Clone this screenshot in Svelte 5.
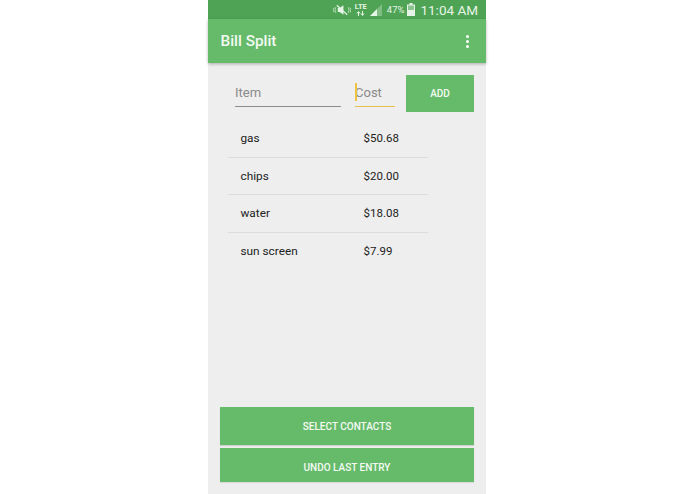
<script>
  const rows = [
    { item: 'gas', cost: '$50.68' },
    { item: 'chips', cost: '$20.00' },
    { item: 'water', cost: '$18.08' },
    { item: 'sun screen', cost: '$7.99' }
  ];
</script>

<div class="page">
  <div class="phone">
    <div class="status">
      <svg class="mute" width="18" height="12" viewBox="0 0 19 12" aria-hidden="true">
        <path d="M1 3.500 0 6l1 2.500M3 3 2 6l1 3M16 3l1 3-1 3M18 3.500 19 6l-1 2.500" fill="none" stroke="#d8ecd9" stroke-width=".8"/>
        <path d="M5 4h2l4-3v10L7 8H5z" fill="#e6f3e7"/>
        <path d="M4 1l11 10" stroke="#e6f3e7" stroke-width="1.200"/>
      </svg>
      <div class="lte">
        <span>LTE</span>
        <svg width="9" height="5" viewBox="0 0 9 5" aria-hidden="true">
          <path d="M2.500 5V1M1 2.500 2.500.5 4 2.500M6.500 0v4M5 2.500 6.500 4.500 8 2.500" fill="none" stroke="#e6f3e7" stroke-width="1"/>
        </svg>
      </div>
      <svg class="signal" width="12" height="12" viewBox="0 0 12 12" aria-hidden="true">
        <path d="M0 12 12 0v12z" fill="#7fbd82"/>
        <path d="M0 12 7 5v7z" fill="#e6f3e7"/>
      </svg>
      <span class="pct">47%</span>
      <svg class="battery" width="8" height="13" viewBox="0 0 8 13" aria-hidden="true">
        <path d="M2.500 0h3v1.500h2.500V13H0V1.500h2.500z" fill="#e6f3e7"/>
        <path d="M1 2.500h6V7H1z" fill="#8cc48f"/>
      </svg>
      <span class="clock">11:04 AM</span>
    </div>

    <header class="bar">
      <span class="title">Bill Split</span>
      <div class="overflow" aria-hidden="true"><i></i><i></i><i></i></div>
    </header>

    <main class="content">
      <div class="entry">
        <div class="field item"><span class="hint">Item</span></div>
        <div class="field cost"><span class="caret"></span><span class="hint">Cost</span></div>
        <button class="btn add">ADD</button>
      </div>

      <ul class="list">
        {#each rows as row}
          <li>
            <span class="name">{row.item}</span>
            <span class="price">{row.cost}</span>
          </li>
        {/each}
      </ul>

      <div class="actions">
        <button class="btn select">SELECT CONTACTS</button>
        <button class="btn undo">UNDO LAST ENTRY</button>
      </div>
    </main>
  </div>
</div>

<style>
  :global(body) {
    margin: 0;
    background: #fff;
  }
  .page {
    width: 695px;
    height: 494px;
    display: flex;
    justify-content: center;
    overflow: hidden;
    font-family: Roboto, "Liberation Sans", sans-serif;
  }
  .phone {
    width: 278px;
    height: 494px;
    margin-left: -1px;
    display: flex;
    flex-direction: column;
    background: #eeeeee;
  }
  .status {
    height: 19px;
    flex: none;
    display: flex;
    align-items: center;
    justify-content: flex-end;
    padding-right: 8px;
    background: #4ea454;
    color: #e6f3e7;
  }
  .mute { margin-right: 4px; }
  .lte {
    display: flex;
    flex-direction: column;
    align-items: center;
    margin-right: 3px;
    margin-top: -1px;
  }
  .lte span {
    font-size: 7.500px;
    font-weight: 700;
    line-height: 8px;
  }
  .pct {
    font-size: 9.500px;
    margin-left: 5px;
    margin-right: 3px;
  }
  .clock {
    font-size: 13.500px;
    margin-left: 5px;
  }
  .bar {
    height: 44px;
    flex: none;
    display: flex;
    align-items: center;
    justify-content: space-between;
    padding: 0 17px 0 12.500px;
    background: #66bb6a;
    box-shadow: 0 1px 3px rgba(0, 0, 0, .28);
    z-index: 1;
  }
  .title {
    font-size: 15.300px;
    font-weight: 500;
    color: #f2f9f2;
  }
  .overflow {
    display: flex;
    flex-direction: column;
    gap: 2px;
  }
  .overflow i {
    width: 3px;
    height: 3px;
    border-radius: 50%;
    background: #fff;
  }
  .content {
    flex: 1;
    display: flex;
    flex-direction: column;
    min-height: 0;
  }
  .entry {
    display: flex;
    align-items: flex-start;
    padding: 12px 12px 0 27px;
  }
  .field {
    position: relative;
    height: 31px;
    box-sizing: border-box;
    margin-top: 1px;
    padding-top: 3px;
    display: flex;
    align-items: center;
  }
  .field.item {
    width: 106px;
    border-bottom: 1px solid #8c8c8c;
    margin-right: 14px;
  }
  .field.cost {
    width: 40px;
    border-bottom: 1px solid #e8bf4f;
    margin-right: 11px;
  }
  .hint {
    font-size: 13px;
    color: #8a8a8a;
  }
  .caret {
    position: absolute;
    left: 0;
    top: 7px;
    width: 2px;
    height: 18px;
    background: #eec33d;
  }
  .btn {
    border: 0;
    padding: 0;
    background: #66bb6a;
    color: #f4faf4;
    font-family: inherit;
    font-size: 10px;
    font-weight: 500;
  }
  .add {
    width: 68px;
    height: 37px;
  }
  .list {
    list-style: none;
    margin: 8px 0 0 20px;
    padding: 0;
    width: 200px;
  }
  .list li {
    height: 37.500px;
    box-sizing: border-box;
    display: flex;
    align-items: center;
    font-size: 11.800px;
    color: #222222;
    border-bottom: 1px solid #dcdcdc;
  }
  .list li:last-child { border-bottom: 0; }
  .name {
    width: 135.500px;
    padding-left: 12.500px;
    box-sizing: border-box;
  }
  .price { font-size: 11.500px; }
  .actions {
    margin-top: auto;
    display: flex;
    flex-direction: column;
    gap: 3px;
    padding: 0 12px 12px;
  }
  .select { height: 38px; box-shadow: 0 1px 1px rgba(0, 0, 0, .12); }
  .undo { height: 34px; padding-top: 4px; box-shadow: 0 1px 1px rgba(0, 0, 0, .08); }
</style>
